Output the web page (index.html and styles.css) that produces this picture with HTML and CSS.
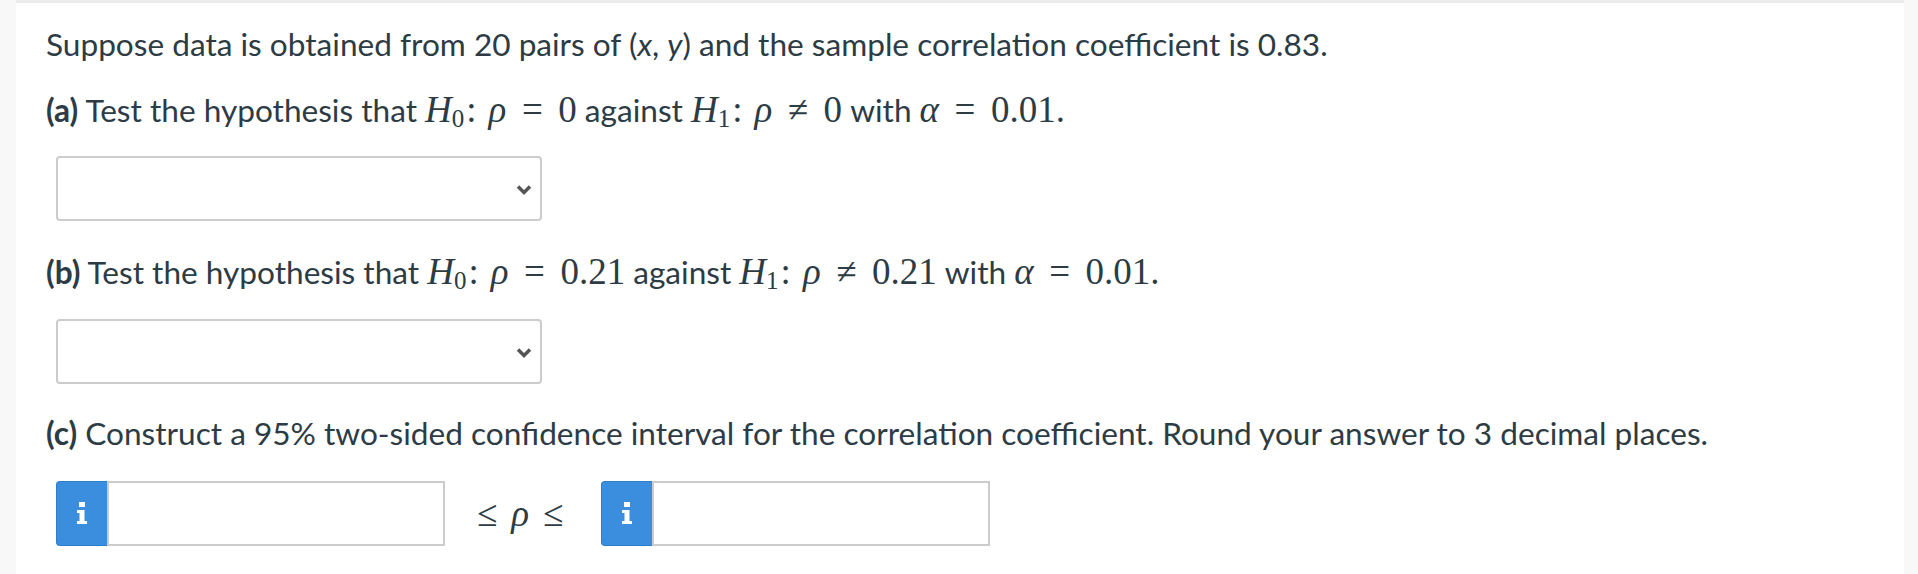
FILE: index.html
```html
<!DOCTYPE html>
<html>
<head>
<meta charset="utf-8">
<link rel="stylesheet" href="styles.css">
</head>
<body>
<div class="page">
  <div class="side side-left"></div>
  <div class="main">
    <p class="line l1">Suppose data is obtained from 20 pairs of (<i>x</i>, <i>y</i>) and the sample correlation coefficient is 0.83.</p>
    <p class="line l2"><b>(a)</b> Test the hypothesis that <span class="m"><i>H</i><sub>0</sub><span class="col">:</span><i>ρ</i><span class="rel">=</span>0</span> against <span class="m"><i>H</i><sub>1</sub><span class="col">:</span><i>ρ</i><span class="rel">≠</span>0</span> with <span class="m"><i>α</i><span class="rel">=</span>0.01.</span></p>
    <div class="select s1"><span class="chev"><svg width="16" height="11" viewBox="0 0 16 11"><path d="M2 2.5 L8 8.5 L14 2.5" fill="none" stroke="#555" stroke-width="3.4"/></svg></span></div>
    <p class="line l3"><b>(b)</b> Test the hypothesis that <span class="m"><i>H</i><sub>0</sub><span class="col">:</span><i>ρ</i><span class="rel">=</span>0.21</span> against <span class="m"><i>H</i><sub>1</sub><span class="col">:</span><i>ρ</i><span class="rel">≠</span>0.21</span> with <span class="m"><i>α</i><span class="rel">=</span>0.01.</span></p>
    <div class="select s2"><span class="chev"><svg width="16" height="11" viewBox="0 0 16 11"><path d="M2 2.5 L8 8.5 L14 2.5" fill="none" stroke="#555" stroke-width="3.4"/></svg></span></div>
    <p class="line l4"><b>(c)</b> Construct a 95% two-sided confidence interval for the correlation coefficient. Round your answer to 3 decimal places.</p>
    <div class="row">
      <div class="group">
        <div class="addon"><svg width="12" height="22" viewBox="0 0 12 22"><rect x="3" y="0" width="6" height="5" fill="#fff"/><path d="M1 8 H8.5 V19 H11 V22 H1 V19 H3.5 V11 H1 Z" fill="#fff"/></svg></div>
        <div class="field"></div>
      </div>
      <span class="ineq"><span class="le">≤</span><i class="rho">ρ</i><span class="le">≤</span></span>
      <div class="group">
        <div class="addon"><svg width="12" height="22" viewBox="0 0 12 22"><rect x="3" y="0" width="6" height="5" fill="#fff"/><path d="M1 8 H8.5 V19 H11 V22 H1 V19 H3.5 V11 H1 Z" fill="#fff"/></svg></div>
        <div class="field"></div>
      </div>
    </div>
  </div>
  <div class="side side-right"></div>
</div>
</body>
</html>
```

FILE: styles.css
```css
html, body {
  margin: 0;
  padding: 0;
  background: #ffffff;
}
.page {
  display: flex;
  width: 1918px;
  height: 574px;
  overflow: hidden;
}
.side {
  background: #f8f8f8;
  flex: none;
}
.side-left { width: 16px; }
.side-right { width: 14px; }
.main {
  flex: 1;
  border-top: 3px solid #ebebeb;
  padding: 21px 0 0 30px;
  font-family: Lato, "Open Sans", sans-serif;
  font-size: 31.6px;
  color: #2d3b45;
}
.line {
  margin: 0;
  height: 40px;
  line-height: 40px;
  white-space: nowrap;
}
.line b { font-weight: 700; }
.l2 { margin-top: 26px; }
.l3 { margin-top: 31px; }
.l4 { margin-top: 29px; }
.m {
  font-family: "Liberation Serif", "DejaVu Serif", serif;
  font-size: 37px;
}
.m sub {
  font-size: 25px;
  vertical-align: -5px;
  line-height: 0;
}
.col { margin: 0 12px 0 2px; }
.rel { margin: 0 15.5px; }
.select {
  position: relative;
  width: 482px;
  height: 61px;
  margin-left: 10px;
  border: 2px solid #cccccc;
  border-radius: 4px;
  background: #fff;
}
.s1 { margin-top: 26px; }
.s2 { margin-top: 27px; }
.chev {
  position: absolute;
  right: 8px;
  top: 25px;
  line-height: 0;
}
.row {
  display: flex;
  align-items: center;
  margin-top: 28px;
  margin-left: 10px;
}
.group {
  display: flex;
  height: 65px;
}
.addon {
  width: 50px;
  background: #3b8ede;
  border: 1px solid #2f7ecb;
  border-right: none;
  border-radius: 4px 0 0 4px;
  display: flex;
  align-items: center;
  justify-content: center;
}
.addon svg { margin-top: -2px; }
.field {
  width: 334px;
  border: 2px solid #cccccc;
  background: #fff;
}
.ineq {
  display: flex;
  align-items: center;
  gap: 14px;
  margin: 0 38px 0 32px;
  font-family: "Liberation Serif", "DejaVu Serif", serif;
  font-size: 37px;
  color: #2d3b45;
}
.rho { font-style: italic; }
```
